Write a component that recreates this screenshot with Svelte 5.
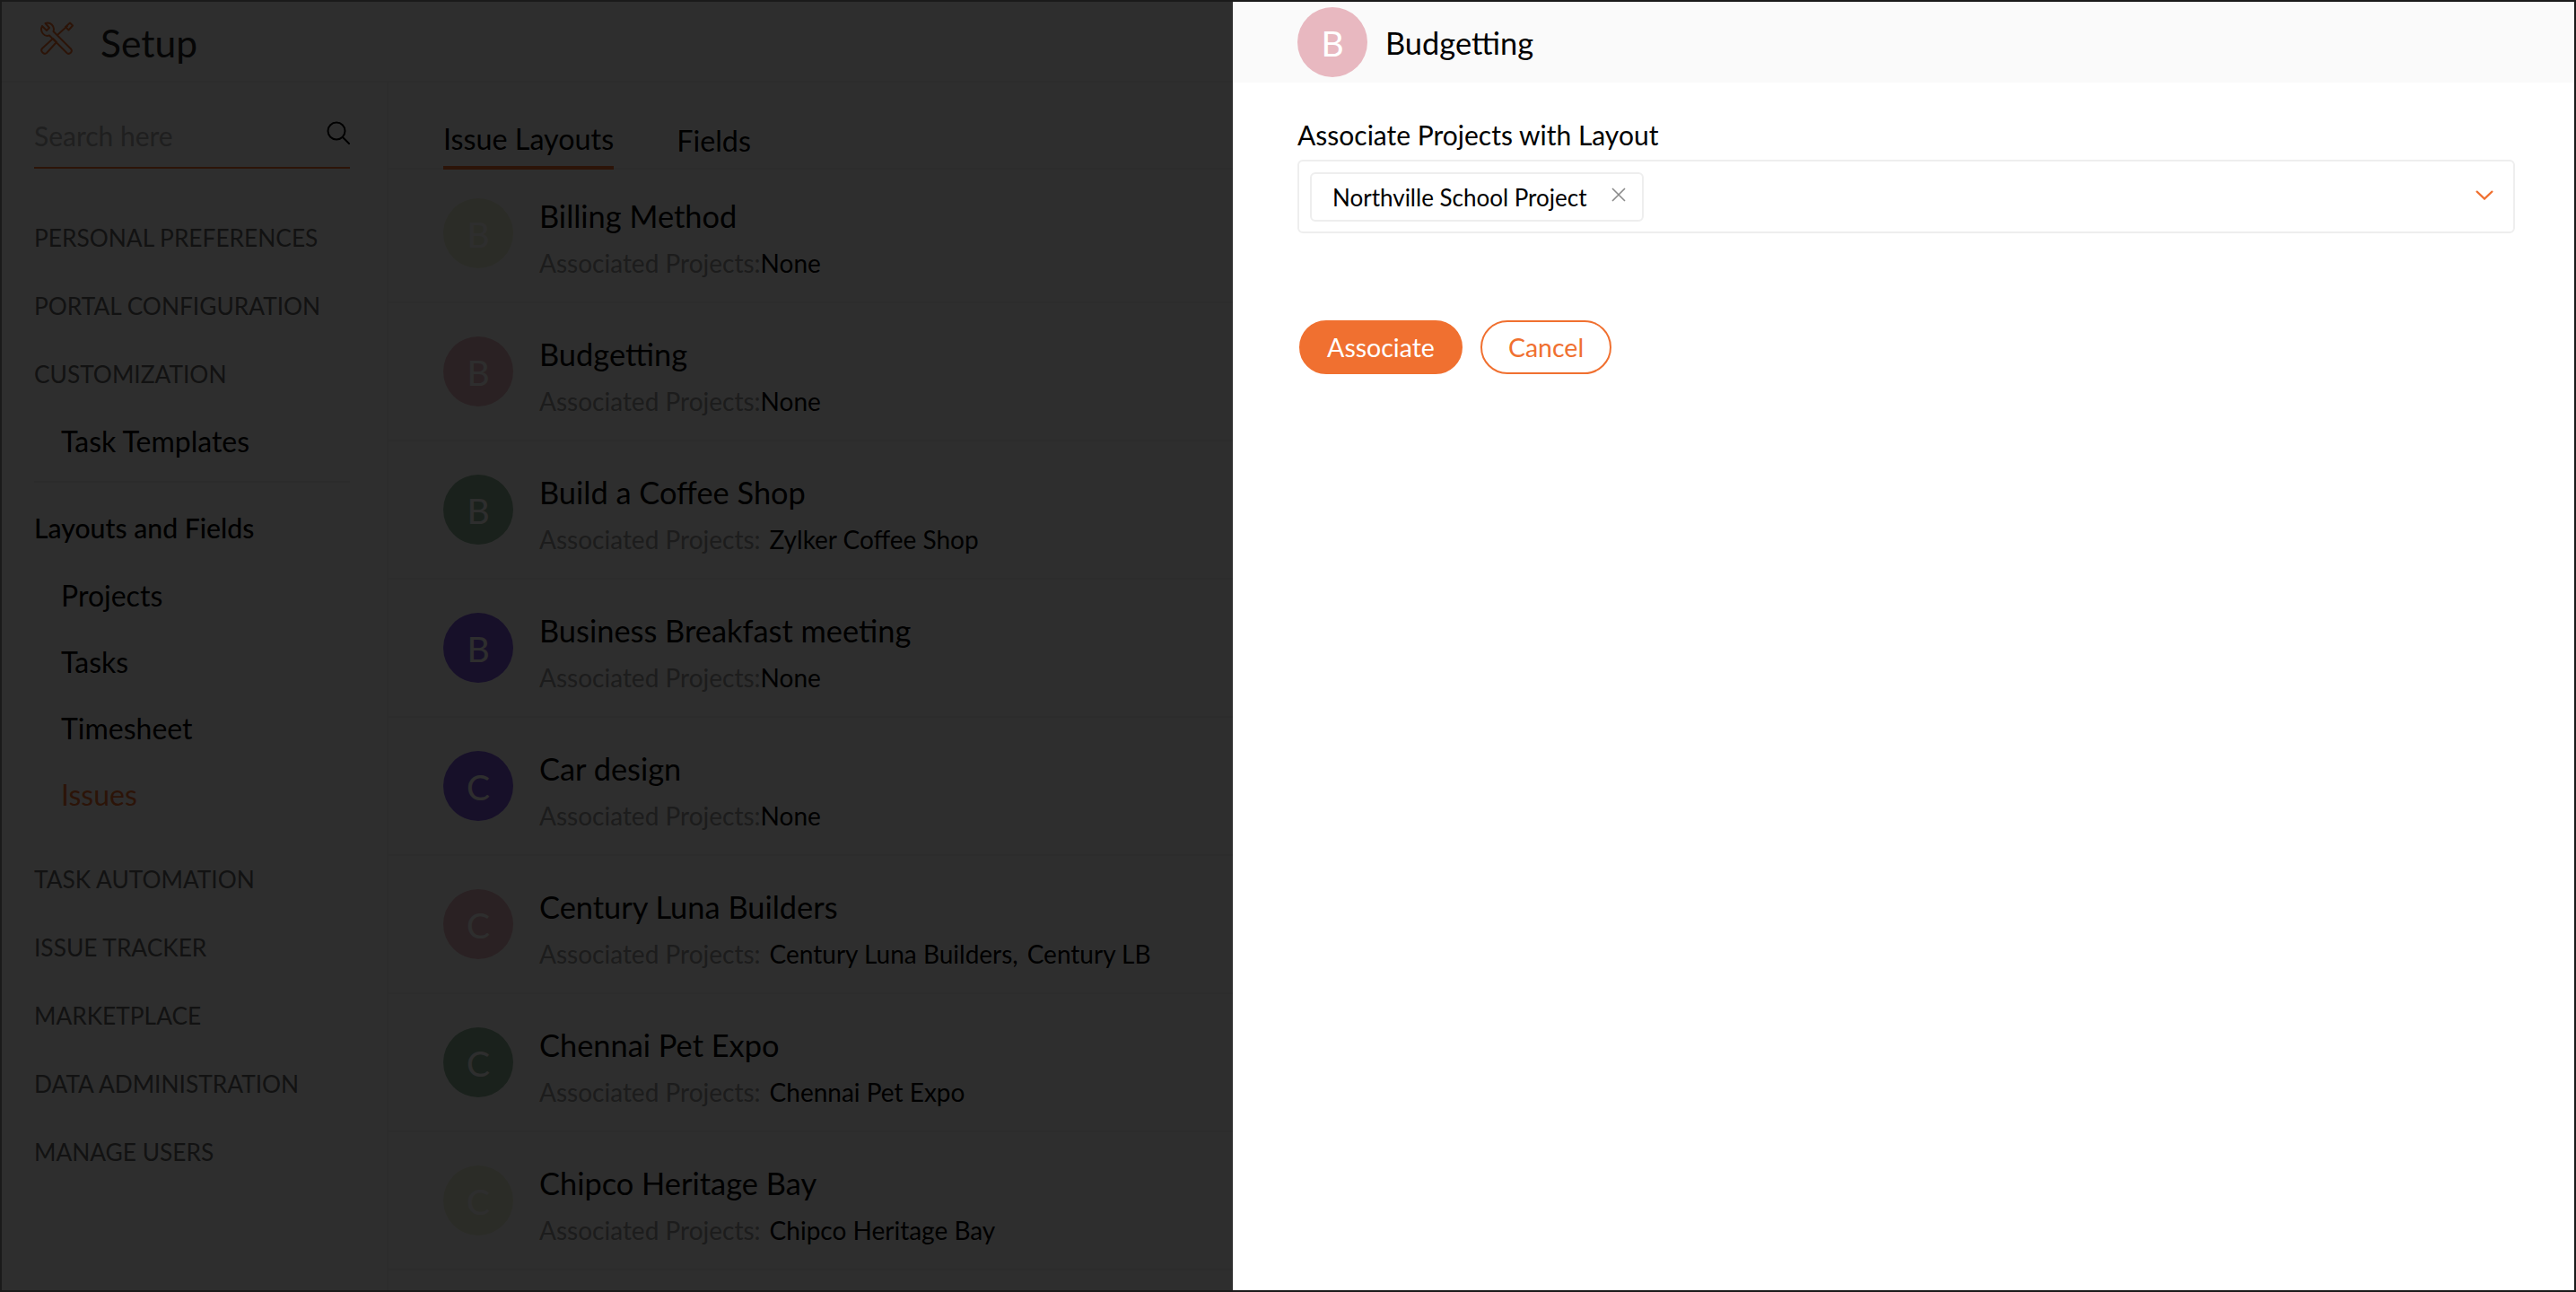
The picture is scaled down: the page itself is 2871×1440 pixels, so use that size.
<script lang="ts">
const topGroups = ["PERSONAL PREFERENCES", "PORTAL CONFIGURATION", "CUSTOMIZATION"];
const layoutLinks = ["Projects", "Tasks", "Timesheet", "Issues"];
const bottomGroups = ["TASK AUTOMATION", "ISSUE TRACKER", "MARKETPLACE", "DATA ADMINISTRATION", "MANAGE USERS"];

const colors = {
	beige: "#eef3d8",
	pink: "#e8b8c0",
	green: "#90b79b",
	purple: "#8059e4",
};

const layouts = [
	{ name: "Billing Method", color: colors.beige, projects: [] },
	{ name: "Budgetting", color: colors.pink, projects: [] },
	{ name: "Build a Coffee Shop", color: colors.green, projects: ["Zylker Coffee Shop"] },
	{ name: "Business Breakfast meeting", color: colors.purple, projects: [] },
	{ name: "Car design", color: colors.purple, projects: [] },
	{ name: "Century Luna Builders", color: colors.pink, projects: ["Century Luna Builders", "Century LB"] },
	{ name: "Chennai Pet Expo", color: colors.green, projects: ["Chennai Pet Expo"] },
	{ name: "Chipco Heritage Bay", color: colors.beige, projects: ["Chipco Heritage Bay"] },
];
</script>

<div class="frame">
	<header class="top">
		<svg class="setup-icon" viewBox="0 0 38 38" fill="none" stroke="currentColor" stroke-width="2" stroke-linejoin="round" stroke-linecap="round">
			<path d="M3 5 L8 10 L11 7 L6.5 2 C12 0 17.5 5 15.5 11 L35 30.5 C37.5 33.5 33.5 37.5 30.5 35 L11 15.5 C5 17.5 0 11 3 5 Z" />
			<path d="M15 19 L19 23 L8 35 C5 37.5 0.5 33 3 30 Z" />
			<path d="M20 15 L31 5" />
			<path d="M29 6 L34 1.5 L37 4.5 L32.5 9.5 Z" />
		</svg>
		<span class="setup-title">Setup</span>
	</header>

	<div class="body">
		<aside class="sidebar">
			<div class="search">
				<span>Search here</span>
				<svg viewBox="0 0 26 26" fill="none" stroke="currentColor" stroke-width="2" stroke-linecap="round">
					<circle cx="11" cy="11" r="9.5" />
					<path d="M18 18 L25 25" />
				</svg>
			</div>

			<nav class="nav">
				{#each topGroups as group}
					<div class="group">{group}</div>
				{/each}
				<div class="link">Task Templates</div>
				<div class="divider"></div>
				<div class="section">Layouts and Fields</div>
				{#each layoutLinks as link}
					<div class="link" class:active={link === "Issues"}>{link}</div>
				{/each}
				<div class="gap"></div>
				{#each bottomGroups as group}
					<div class="group">{group}</div>
				{/each}
			</nav>
		</aside>

		<main class="content">
			<div class="tabs">
				<span class="tab selected">Issue Layouts</span>
				<span class="tab">Fields</span>
			</div>

			<div class="list">
				{#each layouts as layout}
					<div class="row">
						<div class="avatar" style="background: {layout.color}">{layout.name[0]}</div>
						<div class="info">
							<div class="name">{layout.name}</div>
							<div class="assoc">
								<span class="assoc-label">Associated Projects:</span>{#if layout.projects.length === 0}<span class="value">None</span>{:else}{#each layout.projects as project, i}<span class="value spaced">{project}{i < layout.projects.length - 1 ? "," : ""}</span>{/each}{/if}
							</div>
						</div>
					</div>
				{/each}
			</div>
		</main>
	</div>

	<div class="overlay"></div>

	<section class="panel">
		<div class="panel-head">
			<div class="avatar" style="background: {colors.pink}">B</div>
			<span class="panel-title">Budgetting</span>
		</div>
		<div class="panel-body">
			<div class="field-label">Associate Projects with Layout</div>
			<div class="select">
				<div class="chip">
					<span>Northville School Project</span>
					<svg viewBox="0 0 16 16" fill="none" stroke="#8a8a8a" stroke-width="1.6">
						<path d="M1 1 L15 15 M15 1 L1 15" />
					</svg>
				</div>
				<svg class="chevron" viewBox="0 0 20 11" fill="none" stroke="#f07030" stroke-width="2.4">
					<path d="M1 1 L10 9.5 L19 1" />
				</svg>
			</div>
			<div class="actions">
				<button class="btn primary">Associate</button>
				<button class="btn ghost">Cancel</button>
			</div>
		</div>
	</section>
</div>

<style>
	:global(body) {
		background: #fff;
	}

	.frame {
		position: relative;
		width: 2871px;
		height: 1440px;
		box-sizing: border-box;
		border: 2px solid #1a1a1a;
		overflow: hidden;
		background: #fff;
		color: #000;
		font-family: Lato, "Liberation Sans", sans-serif;
	}

	.top {
		display: flex;
		align-items: center;
		height: 88px;
		padding-left: 42px;
		border-bottom: 2px solid #f0f0f0;
	}

	.setup-icon {
		width: 38px;
		height: 38px;
		color: #f07030;
		margin-top: -6px;
	}

	.setup-title {
		margin-left: 30px;
		font-size: 42.5px;
		color: #222;
		margin-top: 2px;
	}

	.body {
		display: flex;
	}

	.sidebar {
		width: 431px;
		box-sizing: border-box;
		padding: 0 41px 0 36px;
		flex-shrink: 0;
		border-right: 2px solid #f4f4f4;
		height: 1350px;
	}

	.search {
		display: flex;
		align-items: flex-start;
		justify-content: space-between;
		height: 96px;
		box-sizing: border-box;
		padding-top: 41px;
		border-bottom: 2px solid #f07030;
		font-size: 30px;
		color: #aaa;
	}

	.search svg {
		width: 26px;
		height: 26px;
		color: #000;
		margin-top: 2px;
	}

	.nav {
		margin-top: 38px;
	}

	.group {
		display: flex;
		align-items: center;
		height: 76px;
		padding-top: 2px;
		box-sizing: border-box;
		font-size: 26.3px;
		color: #666;
	}

	.link {
		display: flex;
		align-items: center;
		height: 74px;
		padding-left: 30px;
		font-size: 32px;
		color: #000;
	}

	.link.active {
		color: #f07030;
	}

	.divider {
		height: 2px;
		margin: 8px 0 10px;
		background: #eee;
	}

	.section {
		display: flex;
		align-items: center;
		height: 76px;
		padding-top: 3px;
		box-sizing: border-box;
		margin-bottom: 2px;
		font-size: 30.2px;
		font-weight: 500;
		color: #000;
	}

	.gap {
		height: 19px;
	}

	.content {
		flex: 1;
		min-width: 0;
	}

	.tabs {
		display: flex;
		gap: 70px;
		height: 97px;
		box-sizing: border-box;
		padding-left: 61px;
		border-bottom: 2px solid #f0f0f0;
	}

	.tab {
		display: flex;
		align-items: center;
		height: 97px;
		padding-top: 32px;
		box-sizing: border-box;
		font-size: 32.3px;
		color: #000;
	}

	.tab.selected {
		border-bottom: 4px solid #f07030;
	}

	.row {
		display: flex;
		height: 154px;
		box-sizing: border-box;
		padding: 37px 0 0 61px;
		gap: 29px;
		border-bottom: 2px solid #f0f0f0;
	}

	.row:first-child {
		height: 149px;
		padding-top: 32px;
	}

	.avatar {
		display: flex;
		align-items: center;
		justify-content: center;
		width: 78px;
		height: 78px;
		box-sizing: border-box;
		padding-top: 2px;
		flex-shrink: 0;
		border-radius: 50%;
		font-size: 39px;
		color: #fff;
	}

	.info {
		margin-top: -4px;
	}

	.name {
		font-size: 34.4px;
		line-height: 48px;
		color: #000;
	}

	.assoc {
		margin-top: 9px;
		font-size: 28px;
		line-height: 38px;
		white-space: nowrap;
	}

	.assoc-label {
		color: #999;
	}

	.value {
		color: #000;
	}

	.value.spaced {
		margin-left: 10px;
	}

	.overlay {
		position: absolute;
		inset: 0;
		background: rgba(0, 0, 0, 0.82);
	}

	.panel {
		position: absolute;
		top: 0;
		bottom: 0;
		right: 0;
		width: 1495px;
		background: #fff;
	}

	.panel-head {
		display: flex;
		align-items: center;
		gap: 20px;
		height: 90px;
		padding-left: 72px;
		background: #fafafa;
	}

	.panel-title {
		font-size: 34.4px;
		color: #000;
	}

	.panel-body {
		padding: 0 66px 0 72px;
	}

	.field-label {
		margin-top: 38px;
		font-size: 30px;
		line-height: 40px;
		color: #000;
	}

	.select {
		display: flex;
		align-items: center;
		justify-content: space-between;
		height: 82px;
		box-sizing: border-box;
		margin-top: 8px;
		padding: 0 22px 0 12px;
		border: 2px solid #eee;
		border-radius: 6px;
	}

	.chip {
		display: flex;
		align-items: center;
		height: 55px;
		box-sizing: border-box;
		padding: 0 18px 0 23px;
		gap: 27px;
		border: 2px solid #eee;
		border-radius: 6px;
		font-size: 26px;
		color: #000;
	}

	.chip span {
		padding-top: 2px;
	}

	.chip svg {
		width: 16px;
		height: 16px;
		margin-top: -4px;
	}

	.chevron {
		width: 20px;
		height: 11px;
		margin-top: -4px;
	}

	.actions {
		display: flex;
		gap: 20px;
		margin-top: 97px;
		padding-left: 2px;
	}

	.btn {
		height: 60px;
		box-sizing: border-box;
		border-radius: 30px;
		border: 2px solid #f07030;
		font-family: inherit;
		font-size: 28.5px;
	}

	.primary {
		width: 182px;
		background: #f07030;
		color: #fff;
	}

	.ghost {
		width: 146px;
		background: #fff;
		color: #f07030;
	}
</style>
